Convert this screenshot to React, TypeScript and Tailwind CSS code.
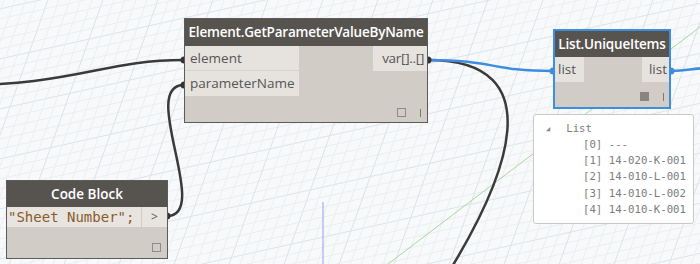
import React from 'react'

const sans = { fontFamily: '"Open Sans", "Noto Sans", sans-serif' }
const mono = { fontFamily: '"DejaVu Sans Mono", "Liberation Mono", monospace' }

// background perspective grid of the canvas
const GridBackground = () => {
  const lines: React.ReactNode[] = []
  for (let i = -40; i < 80; i++) {
    const y = i * 10
    lines.push(
      <line key={`a${i}`} x1={-50} y1={y + 120} x2={760} y2={y - 60} stroke={i % 5 === 0 ? '#dde3e8' : '#ebeff2'} strokeWidth={1} />
    )
  }
  for (let i = -40; i < 110; i++) {
    const x = i * 11
    lines.push(
      <line key={`b${i}`} x1={x} y1={-20} x2={x - 110} y2={290} stroke={i % 5 === 0 ? '#dde3e8' : '#ebeff2'} strokeWidth={1} />
    )
  }
  return (
    <svg className="absolute inset-0" width={700} height={264}>
      <rect width={700} height={264} fill="#f8f9fa" />
      {lines}
      <line x1={323} y1={202} x2={323} y2={264} stroke="#9a9af0" strokeWidth={1} />
      <line x1={388} y1={264} x2={700} y2={27} stroke="#a6d8a0" strokeWidth={1} />
    </svg>
  )
}

const Wires = () => (
  <svg className="absolute inset-0" width={700} height={264}>
    <path d="M -60 86 C 80 86 100 60 184 60" fill="none" stroke="#3a3a3a" strokeWidth={2.5} />
    <path d="M 167 216 C 212 216 138 85 184 85" fill="none" stroke="#3a3a3a" strokeWidth={2.5} />
    <path d="M 428 60 C 555 60 505 180 450 270" fill="none" stroke="#3a3a3a" strokeWidth={2.5} />
    <path d="M 428 60 C 495 60 490 71 553 71" fill="none" stroke="#3c8fe0" strokeWidth={2.5} />
    <path d="M 671 71 C 690 71 690 68 710 68" fill="none" stroke="#3c8fe0" strokeWidth={2.5} />
    <circle cx={184} cy={60} r={3.5} fill="#333" />
    <circle cx={184} cy={85} r={3.5} fill="#333" />
    <circle cx={428} cy={60} r={3.5} fill="#333" />
    <circle cx={167} cy={216} r={3.5} fill="#333" />
    <circle cx={553} cy={71} r={3.5} fill="#3c8fe0" />
    <circle cx={671} cy={71} r={3.5} fill="#3c8fe0" />
  </svg>
)

const Square = ({ filled = false }: { filled?: boolean }) => (
  <div
    className={`w-[9px] h-[9px] border ${filled ? 'bg-[#8a8580] border-[#8a8580]' : 'border-[#8c8c8c] bg-transparent'}`}
  />
)

const Bar = () => <div className="w-[1px] h-[8px] bg-[#7a7a7a] mt-[2px]" />

export default function App() {
  return (
    <div className="relative w-[700px] h-[264px] overflow-hidden" style={sans}>
      <GridBackground />
      <Wires />

      {/* Element.GetParameterValueByName */}
      <div className="absolute left-[184px] top-[18px] w-[244px] h-[105px] flex flex-col border border-[#5b5b5b] bg-[#d1ccc5]">
        <div className="h-[27px] bg-[#57534f] text-white text-[13.5px] font-semibold flex items-center justify-center tracking-[-0.2px]">
          Element.GetParameterValueByName
        </div>
        <div className="flex justify-between">
          <div className="flex flex-col w-[114px]">
            <div className="h-[25px] bg-[#e6e3de] border-b border-[#d6d2cc] text-[13.5px] text-[#555] pl-[5px] flex items-center">element</div>
            <div className="h-[25px] bg-[#e6e3de] text-[13.5px] text-[#555] pl-[5px] flex items-center">parameterName</div>
          </div>
          <div className="h-[25px] w-[54px] bg-[#e6e3de] text-[13.5px] text-[#555] pr-[3px] flex items-center justify-end tracking-[-0.3px]">var[]..[]</div>
        </div>
        <div className="flex-1 flex items-end justify-end gap-[14px] pr-[6px] pb-[5px]">
          <Square />
          <Bar />
        </div>
      </div>

      {/* List.UniqueItems */}
      <div className="absolute left-[553px] top-[29px] w-[118px] h-[80px] flex flex-col border-2 border-[#3c8fe0] bg-[#d1ccc5]">
        <div className="h-[26px] bg-[#57534f] text-white text-[13.5px] font-semibold flex items-center justify-center tracking-[-0.2px]">
          List.UniqueItems
        </div>
        <div className="flex justify-between">
          <div className="h-[25px] w-[29px] bg-[#e6e3de] text-[13.5px] text-[#555] pl-[3px] flex items-center">list</div>
          <div className="h-[25px] w-[27px] bg-[#e6e3de] text-[13.5px] text-[#555] pr-[2px] flex items-center justify-end">list</div>
        </div>
        <div className="flex-1 flex items-end justify-end gap-[14px] pr-[5px] pb-[6px]">
          <Square filled />
          <Bar />
        </div>
      </div>

      {/* watch bubble */}
      <div className="absolute left-[533px] top-[114px] w-[161px] h-[110px] bg-white border border-[#c9c9c9] rounded-[3px] pt-[6px] text-[10.7px] text-[#7d7d7d]" style={mono}>
        <div className="flex items-center h-[16px]">
          <span className="ml-[12px] mr-[16px] text-[7px] text-[#8a8a8a]">◢</span>
          <span>List</span>
        </div>
        {['[0] ---', '[1] 14-020-K-001', '[2] 14-010-L-001', '[3] 14-010-L-002', '[4] 14-010-K-001'].map((t) => (
          <div key={t} className="h-[16.2px] pl-[49px] flex items-center whitespace-pre">
            {t}
          </div>
        ))}
      </div>

      {/* Code Block */}
      <div className="absolute left-[6px] top-[180px] w-[162px] h-[79px] flex flex-col border border-[#5b5b5b] bg-[#d1ccc5]">
        <div className="h-[26px] bg-[#57534f] text-white text-[13.5px] font-semibold flex items-center justify-center">
          Code Block
        </div>
        <div className="flex h-[20px]">
          <div className="flex-1 bg-[#e8e5e0] text-[14px] text-[#8b5a2b] pl-[1px] flex items-center whitespace-pre" style={mono}>
            "Sheet Number";
          </div>
          <div className="w-[25px] ml-[1px] bg-[#e8e5e0] text-[12px] text-[#5a5a5a] flex items-center justify-center">&gt;</div>
        </div>
        <div className="flex-1 flex items-end justify-end pr-[6px] pb-[6px]">
          <Square />
        </div>
      </div>
    </div>
  )
}
